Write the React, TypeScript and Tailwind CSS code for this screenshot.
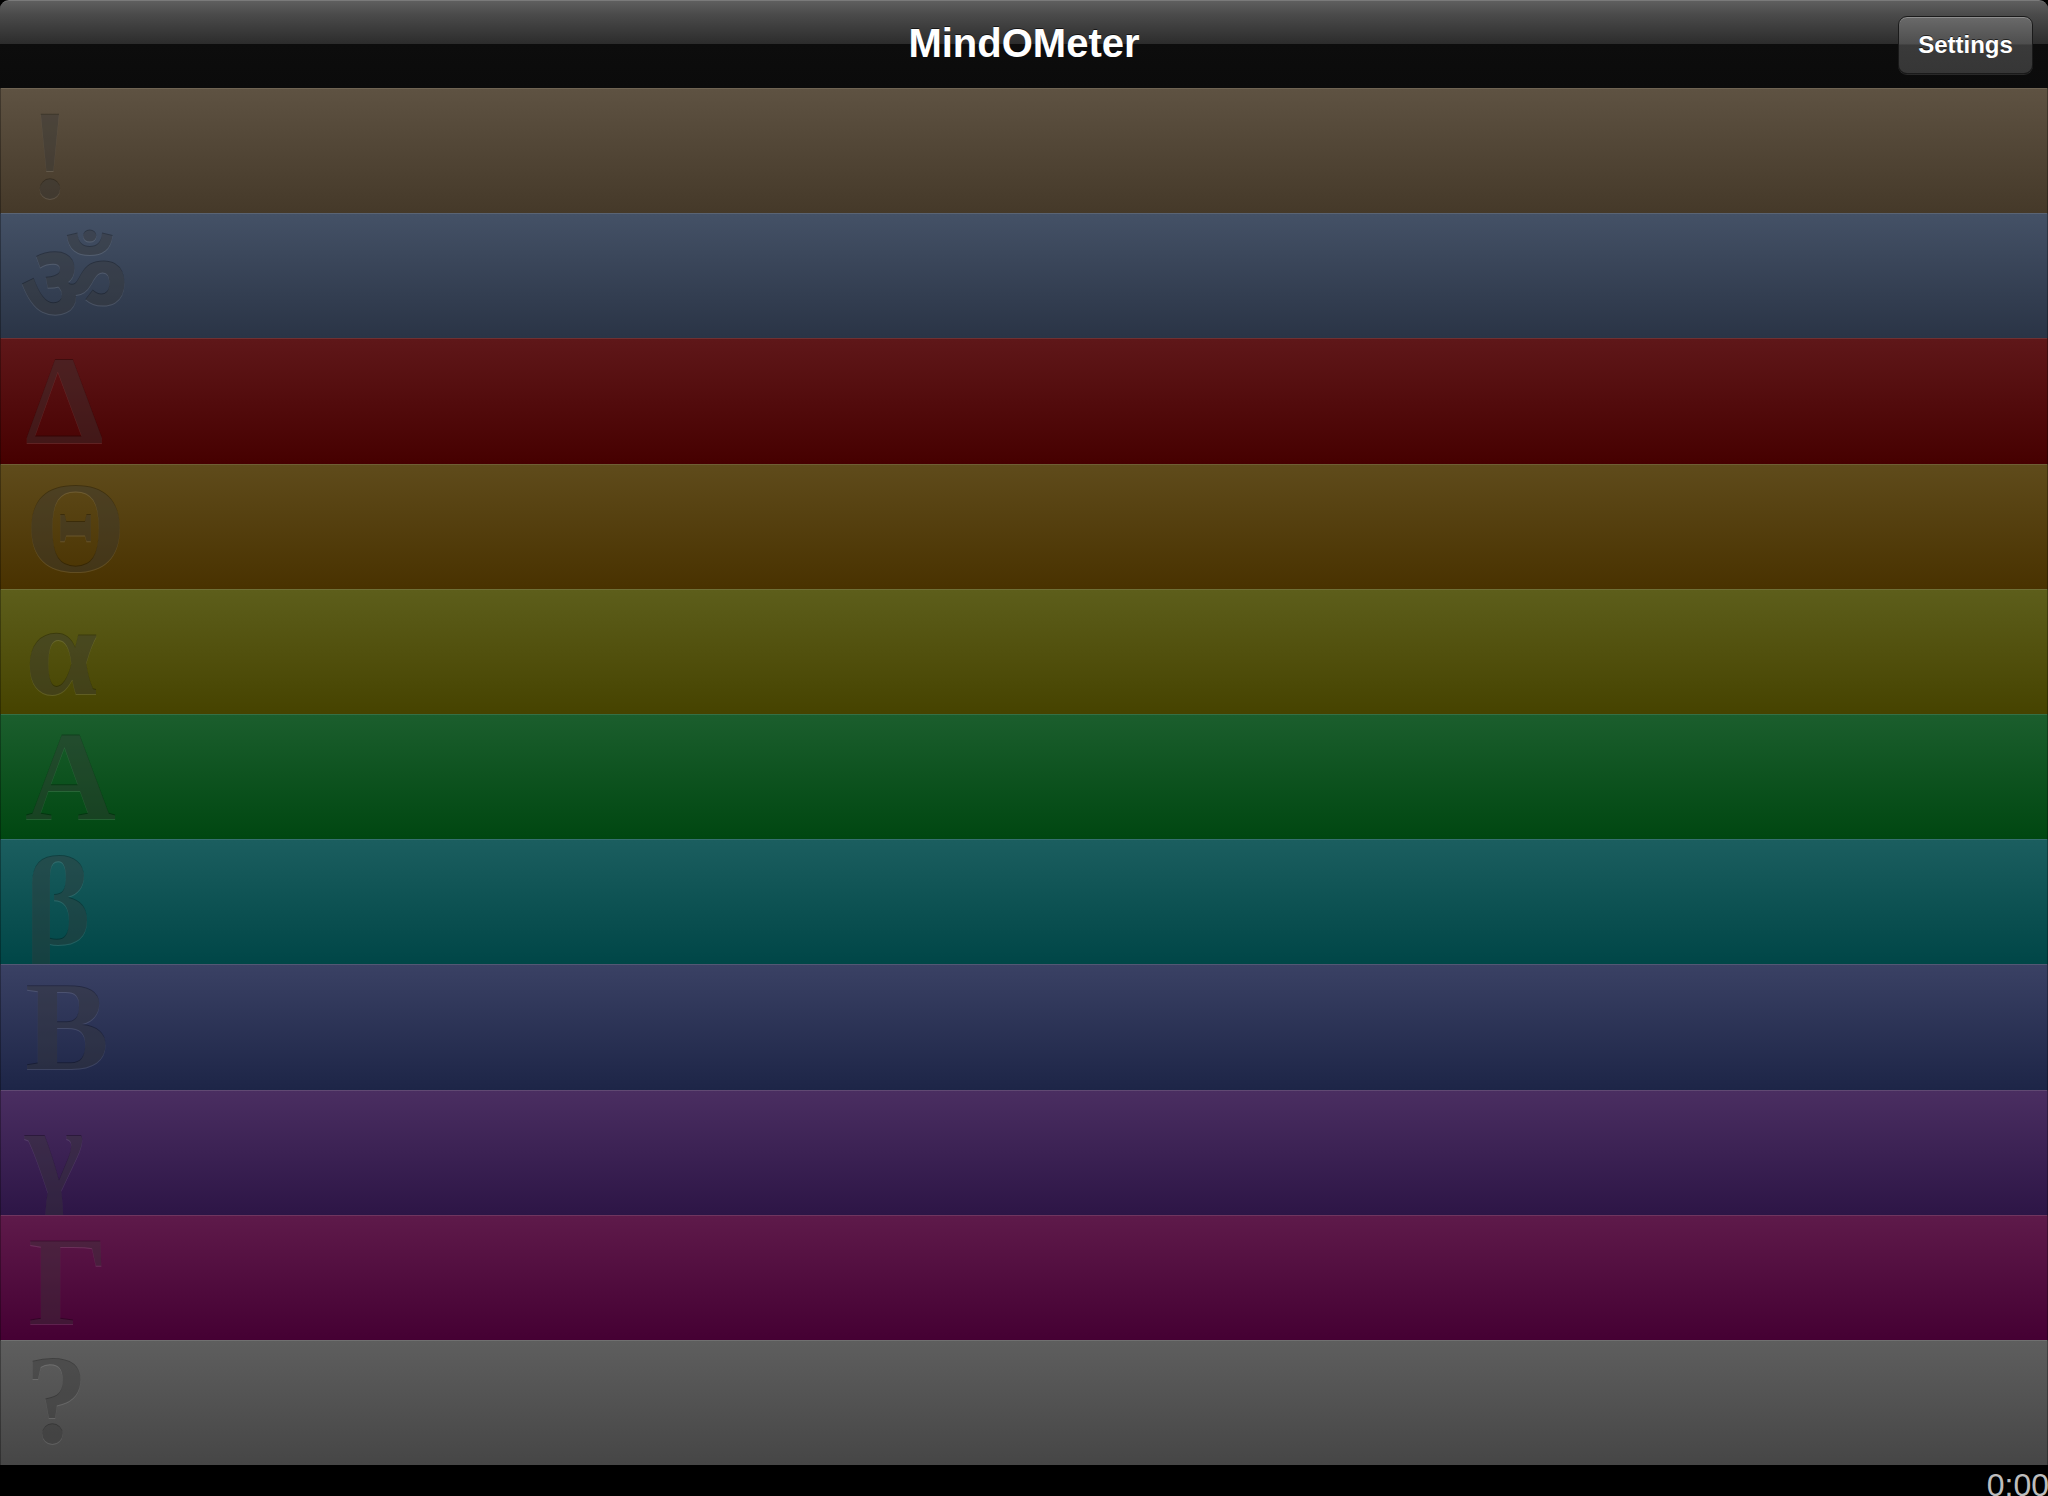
const rows = [
  { glyph: "!", bg: "bg-[linear-gradient(to_bottom,#5e5242,#453929)]", line: "border-[#6f6453]", size: "text-[126px]", shift: "translate-x-[4px] translate-y-[4px]" },
  { glyph: "ॐ", bg: "bg-[linear-gradient(to_bottom,#445166,#2a3446)]", line: "border-[#5a6474]", size: "text-[108px]", shift: "-translate-x-[6px] translate-y-[8px]" },
  { glyph: "Δ", bg: "bg-[linear-gradient(to_bottom,#5f1719,#460000)]", line: "border-[#6f3132]", size: "text-[126px]", shift: "" },
  { glyph: "Θ", bg: "bg-[linear-gradient(to_bottom,#5f4b1b,#493200)]", line: "border-[#6f5e35]", size: "text-[130px]", shift: "" },
  { glyph: "α", bg: "bg-[linear-gradient(to_bottom,#5d5e1b,#464300)]", line: "border-[#6e6f35]", size: "text-[130px]", shift: "-translate-y-[2px]" },
  { glyph: "Α", bg: "bg-[linear-gradient(to_bottom,#1b5e2d,#004711)]", line: "border-[#356f45]", size: "text-[126px]", shift: "" },
  { glyph: "β", bg: "bg-[linear-gradient(to_bottom,#1b5e5f,#004647)]", line: "border-[#356f70]", size: "text-[126px]", shift: "" },
  { glyph: "Β", bg: "bg-[linear-gradient(to_bottom,#3a4164,#1d2547)]", line: "border-[#525874]", size: "text-[126px]", shift: "" },
  { glyph: "γ", bg: "bg-[linear-gradient(to_bottom,#4a2e61,#2d1546)]", line: "border-[#604972]", size: "text-[126px]", shift: "-translate-y-[2px]" },
  { glyph: "Γ", bg: "bg-[linear-gradient(to_bottom,#5e1a4a,#450033)]", line: "border-[#6f355f]", size: "text-[126px]", shift: "translate-x-[3px] translate-y-[4px]" },
  { glyph: "?", bg: "bg-[linear-gradient(to_bottom,#5e5e5e,#464646)]", line: "border-[#707070]", size: "text-[126px]", shift: "-translate-y-[3px]" },
];

export default function App() {
  return (
    <div className="w-[2048px] h-[1496px] bg-black flex flex-col overflow-hidden font-['Liberation_Sans',Arial,sans-serif]">
      <Header />
      <div className="h-[1377px] flex flex-col">
        {rows.map((r) => (
          <div
            key={r.glyph}
            className={`flex-1 flex items-center pl-[24px] border-t border-x border-x-black/30 overflow-hidden ${r.bg} ${r.line}`}
          >
            <span
              className={`font-['Liberation_Serif','DejaVu_Serif','Noto_Sans',serif] font-bold leading-none text-black/30 [text-shadow:0_1px_0_rgba(255,255,255,0.12)] ${r.size} ${r.shift}`}
            >
              {r.glyph}
            </span>
          </div>
        ))}
      </div>
      <div className="flex-1 flex justify-end overflow-hidden pt-[4px]">
        <span className="text-[32px] leading-none text-[#bdbdbd] -mr-[1px]">0:00</span>
      </div>
    </div>
  );
}

function Header() {
  return (
    <header className="h-[88px] shrink-0 rounded-t-[9px] border-t border-[#7a7a7a] bg-[linear-gradient(to_bottom,#5f5f5f_0px,#4a4a4a_14px,#2c2c2c_43px,#0d0d0d_43px,#0b0b0b_87px)] grid grid-cols-[1fr_auto_1fr] items-center">
      <div />
      <h1 className="text-[40px] font-bold text-white leading-none -translate-y-[2px] [text-shadow:0_-1px_0_rgba(0,0,0,0.6)]">
        MindOMeter
      </h1>
      <div className="flex justify-end pr-[15px]">
        <button className="w-[135px] h-[58px] rounded-[9px] border border-[#1a1a1a] shadow-[inset_0_1px_0_rgba(255,255,255,0.25),0_1px_0_rgba(255,255,255,0.12)] bg-[linear-gradient(to_bottom,#6a6a6a_0%,#4e4e4e_48%,#3a3a3a_50%,#363636_100%)] text-[24px] font-bold text-white [text-shadow:0_-1px_0_rgba(0,0,0,0.6)]">
          Settings
        </button>
      </div>
    </header>
  );
}
